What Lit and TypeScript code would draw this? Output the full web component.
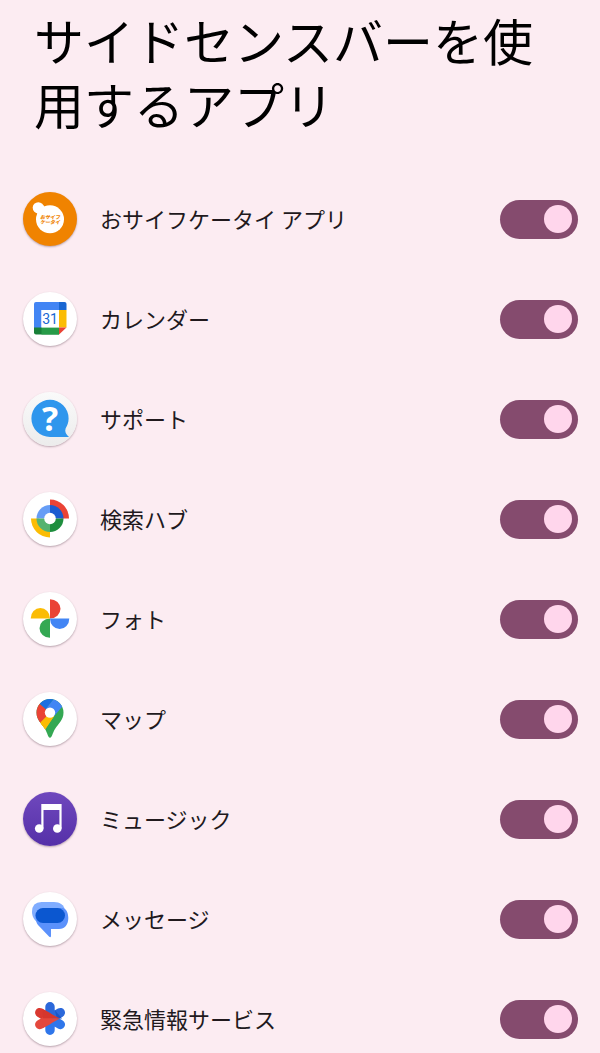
import { LitElement, html, svg, css, type SVGTemplateResult } from "lit";
import { customElement, property, state } from "lit/decorators.js";

interface AppEntry {
  id: string;
  name: string;
  tone: string;
  enabled: boolean;
}

const art: Record<string, SVGTemplateResult> = {
  wallet: svg`
    <circle cx="27" cy="27.3" r="14" fill="#fff" />
    <circle cx="15.3" cy="15.8" r="5.6" fill="#fff" />
    <path d="M13 20 L20 13 L24 18 L17 24Z" fill="#fff" />
    <text class="mark" x="27" y="27" text-anchor="middle">おサイフ</text>
    <text class="mark" x="27" y="32" text-anchor="middle">ケータイ</text>`,
  calendar: svg`
    <path d="M13 10H36V18H18.500V36H11V12Q11 10 13 10Z" fill="#4285f4" />
    <path d="M36 10H41.500Q43.500 10 43.500 12V18H36Z" fill="#1967d2" />
    <path d="M36 18H43.500V35.500H36Z" fill="#fbbc04" />
    <path d="M11 35.500H36V42.500H13Q11 42.500 11 40.500Z" fill="#188038" />
    <path d="M18.500 35.500H36V42.500H18.500Z" fill="#279b48" />
    <path d="M36 35.500H43.500L36 42.500Z" fill="#ea4335" />
    <path d="M18.500 18H36V35.500H18.500Z" fill="#fff" />
    <text class="date" x="27" y="32" text-anchor="middle">31</text>`,
  support: svg`
    <path d="M27 7.800A18.600 18.600 0 0 1 45.600 26.400C45.600 30.500 44.200 33.500 42.600 36.500C41.500 39.500 43 42.500 46 45H27A18.600 18.600 0 0 1 27 7.800Z" fill="#2f96ed" />
    <text class="question" x="27" y="39" text-anchor="middle">?</text>`,
  hub: svg`
    <path d="M27 7.500A19 19 0 0 1 46 26.500H38L27 15Z" fill="#ea4335" />
    <path d="M27 45.500A19 19 0 0 1 8 26.500H16L27 38Z" fill="#fbbc04" />
    <path d="M27 26.500V13A13.500 13.500 0 0 0 13.500 26.500Z" fill="#669df6" />
    <path d="M27 26.500V13A13.500 13.500 0 0 1 40.500 26.500Z" fill="#1a5bd0" />
    <path d="M27 26.500V40A13.500 13.500 0 0 1 13.500 26.500Z" fill="#55b36f" />
    <path d="M27 26.500V40A13.500 13.500 0 0 0 40.500 26.500Z" fill="#1e8e3e" />
    <circle cx="27" cy="26.500" r="5.800" fill="#fff" />`,
  photos: svg`
    <path d="M27 26.500V7.200A10.500 9.650 0 0 1 27 26.500Z" fill="#ea4335" />
    <path d="M27 26.500H46.300A9.650 10.500 0 0 1 27 26.500Z" fill="#4285f4" />
    <path d="M27 26.500V45.800A10.500 9.650 0 0 1 27 26.500Z" fill="#34a853" />
    <path d="M27 26.500H7.700A9.650 10.500 0 0 1 27 26.500Z" fill="#fbbc04" />`,
  maps: svg`
    <clipPath id="pin">
      <path d="M27 7A13.500 13.500 0 0 1 40.500 20.500C40.500 28 35.500 31.500 32 37C29.400 41.200 29 45.700 27 45.700S24.600 41.200 22 37C18.500 31.500 13.500 28 13.500 20.500A13.500 13.500 0 0 1 27 7Z" />
    </clipPath>
    <g clip-path="url(#pin)">
      <path d="M10 5H44V48H10Z" fill="#34a853" />
      <path d="M27 20.500L13 34L20 40L31.300 24Z" fill="#fbbc04" />
      <path d="M20 41L31 24L27 20.500L10 41Z" fill="#fbbc04" />
      <path d="M8 5L16.700 11.800L27 20.500L14 34L8 30Z" fill="#ea4335" />
      <path d="M31.500 6L22.800 17.200L16.700 11.800L20 5Z" fill="#1a6fe0" />
      <path d="M22.600 17.200L31.500 6H44V9L31.300 24L27 20.500Z" fill="#4285f4" />
    </g>
    <circle cx="27" cy="20.600" r="5.200" fill="#fff" />`,
  music: svg`
    <path d="M18.300 12H38.600V36.500H36.400V18H20.500V36.500H18.300Z" fill="#fff" />
    <circle cx="16.200" cy="36.500" r="4.300" fill="#fff" />
    <circle cx="34.300" cy="36.500" r="4.300" fill="#fff" />`,
  messages: svg`
    <path d="M18.500 10H31C37 10 41.200 13 41.800 18L16 31C12 29.500 9 25 9 20Q9 10 18.500 10Z" fill="#80adff" />
    <path d="M20 16H40C43.500 17 45.300 21 45.300 26C45.300 32.500 42 37 36 37H28V44.300Q27.500 46 26 44.500L15 33C12 29 12.500 24 13 21Z" fill="#5b91fb" />
    <rect x="12.500" y="16" width="29.500" height="15" rx="7.500" fill="#0b57d0" />`,
  safety: svg`
    <g fill="none" stroke-width="9.400" stroke-linecap="round">
      <path d="M27 26.500V14.800M27 26.500L37.300 20.600" stroke="#2b68da" />
      <path d="M27 26.500V38.300M27 26.500L37.300 32.500" stroke="#2f76ea" />
      <path d="M16.800 20.600L25 25.300" stroke="#d93830" />
      <path d="M16.800 32.500L25 27.800" stroke="#e4483d" />
    </g>
    <path d="M31.700 18L39 26.500H34Z" fill="#1a56c8" />
    <path d="M19.500 17L36.800 26.600H20Z" fill="#d5362e" />
    <path d="M20 26.600H36.800L19.500 36.200Z" fill="#e4483d" />`,
};

@customElement("app-icon")
export class AppIcon extends LitElement {
  @property() name = "";

  static styles = css`
    :host {
      display: block;
      width: 54px;
      height: 54px;
    }
    .glyph {
      display: block;
      width: 100%;
      height: 100%;
    }
    .mark {
      font: italic 900 5px "Noto Sans CJK JP", sans-serif;
      fill: #f08300;
    }
    .date {
      font: 400 14px Roboto, sans-serif;
      fill: #1967d2;
    }
    .question {
      font: 700 34px "Open Sans", sans-serif;
      fill: #fff;
    }
  `;

  render() {
    return html`<svg class="glyph" viewBox="0 0 54 54" aria-hidden="true">${art[this.name]}</svg>`;
  }
}

@customElement("app-root")
export class AppRoot extends LitElement {
  @state() private apps: AppEntry[] = [
    { id: "wallet", name: "おサイフケータイ アプリ", tone: "orange", enabled: true },
    { id: "calendar", name: "カレンダー", tone: "white", enabled: true },
    { id: "support", name: "サポート", tone: "silver", enabled: true },
    { id: "hub", name: "検索ハブ", tone: "white", enabled: true },
    { id: "photos", name: "フォト", tone: "white", enabled: true },
    { id: "maps", name: "マップ", tone: "white", enabled: true },
    { id: "music", name: "ミュージック", tone: "purple", enabled: true },
    { id: "messages", name: "メッセージ", tone: "white", enabled: true },
    { id: "safety", name: "緊急情報サービス", tone: "white", enabled: true },
  ];

  static styles = css`
    :host {
      display: block;
      box-sizing: border-box;
      min-height: 100vh;
      background: #fcecf2;
      color: #21191d;
      font-family: "Noto Sans CJK JP", sans-serif;
    }
    .title {
      margin: 0;
      padding: 7px 34px 57px;
      color: #000;
      font-size: 50px;
      font-weight: 400;
      line-height: 64px;
    }
    .list {
      display: flex;
      flex-direction: column;
      gap: 46px;
      margin: 0;
      padding: 0 22px 7px 23px;
      list-style: none;
    }
    .row {
      display: flex;
      align-items: center;
      gap: 23px;
    }
    .badge {
      flex: none;
      border-radius: 50%;
      box-shadow: 0 1px 2px rgba(60, 30, 45, 0.35);
    }
    .white {
      background: #fff;
    }
    .orange {
      background: #f08300;
    }
    .silver {
      background: linear-gradient(#fafafa, #ececec);
    }
    .purple {
      background: linear-gradient(#6f48bd, #5530a8);
    }
    .name {
      flex: 1;
      padding-bottom: 2px;
      font-size: 22px;
      line-height: 32px;
    }
    .switch {
      appearance: none;
      flex: none;
      display: flex;
      align-items: center;
      box-sizing: border-box;
      width: 78px;
      height: 39px;
      margin: 0;
      padding: 0 6px;
      border-radius: 20px;
      background: #d8c2cc;
      cursor: pointer;
    }
    .switch::before {
      content: "";
      width: 28px;
      height: 28px;
      border-radius: 50%;
      background: #fff;
    }
    .switch:checked {
      justify-content: flex-end;
      background: #854b6e;
    }
    .switch:checked::before {
      background: #ffd6ec;
    }
  `;

  private toggle(id: string) {
    this.apps = this.apps.map((a) => (a.id === id ? { ...a, enabled: !a.enabled } : a));
  }

  render() {
    return html`
      <main>
        <h1 class="title">サイドセンスバーを使用するアプリ</h1>
        <ul class="list">
          ${this.apps.map(
            (a) => html`
              <li class="row">
                <app-icon class="badge ${a.tone}" name=${a.id}></app-icon>
                <label class="name" for=${a.id}>${a.name}</label>
                <input
                  class="switch"
                  type="checkbox"
                  role="switch"
                  id=${a.id}
                  .checked=${a.enabled}
                  @change=${() => this.toggle(a.id)}
                />
              </li>
            `
          )}
        </ul>
      </main>
    `;
  }
}
